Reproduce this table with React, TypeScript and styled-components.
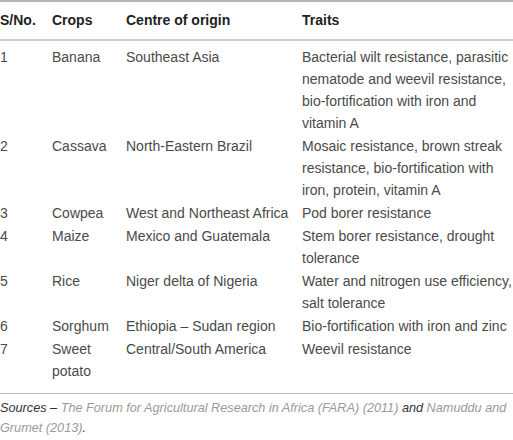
import React from "react";
import styled, { createGlobalStyle } from "styled-components";

const GlobalStyle = createGlobalStyle`
  html, body {
    margin: 0;
    padding: 0;
    background: #ffffff;
  }
  body {
    font-family: "Liberation Sans", Arial, sans-serif;
  }
`;

const Wrapper = styled.div`
  width: 513px;
  color: #444;
`;

const Table = styled.table`
  width: 100%;
  border-collapse: collapse;
  border-top: 2px solid #b4b4b4;
  border-bottom: 1px solid #bdbdbd;
  font-size: 14px;
  line-height: 22px;
`;

const HeadCell = styled.th<{ $w?: number }>`
  text-align: left;
  font-weight: 700;
  color: #222;
  padding: 7px 0 8px;
  border-bottom: 2px solid #cfcfcf;
  vertical-align: top;
  width: ${(p) => (p.$w ? `${p.$w}px` : "auto")};
`;

const Cell = styled.td<{ $first?: boolean; $last?: boolean }>`
  vertical-align: top;
  padding: ${(p) => (p.$first ? "5px" : "0")} 0 ${(p) => (p.$last ? "11px" : "1px")};
  color: #4a4a4a;
`;

const Footnote = styled.div`
  padding: 4px 0 0;
  font-size: 12.7px;
  line-height: 20px;
  font-style: italic;
  color: #333;
`;

const Ref = styled.span`
  color: #9a9a9a;
`;

type Row = { no: string; crop: string; origin: string; traits: string };

const rows: Row[] = [
  {
    no: "1",
    crop: "Banana",
    origin: "Southeast Asia",
    traits:
      "Bacterial wilt resistance, parasitic nematode and weevil resistance, bio-fortification with iron and vitamin A",
  },
  {
    no: "2",
    crop: "Cassava",
    origin: "North-Eastern Brazil",
    traits:
      "Mosaic resistance, brown streak resistance, bio-fortification with iron, protein, vitamin A",
  },
  { no: "3", crop: "Cowpea", origin: "West and Northeast Africa", traits: "Pod borer resistance" },
  { no: "4", crop: "Maize", origin: "Mexico and Guatemala", traits: "Stem borer resistance, drought tolerance" },
  {
    no: "5",
    crop: "Rice",
    origin: "Niger delta of Nigeria",
    traits: "Water and nitrogen use efficiency, salt tolerance",
  },
  { no: "6", crop: "Sorghum", origin: "Ethiopia \u2013 Sudan region", traits: "Bio-fortification with iron and zinc" },
  { no: "7", crop: "Sweet potato", origin: "Central/South America", traits: "Weevil resistance" },
];

export default function App() {
  return (
    <Wrapper>
      <GlobalStyle />
      <Table>
        <thead>
          <tr>
            <HeadCell $w={52}>S/No.</HeadCell>
            <HeadCell $w={74}>Crops</HeadCell>
            <HeadCell $w={176}>Centre of origin</HeadCell>
            <HeadCell>Traits</HeadCell>
          </tr>
        </thead>
        <tbody>
          {rows.map((r, i) => {
            const first = i === 0;
            const last = i === rows.length - 1;
            return (
              <tr key={r.no}>
                <Cell $first={first} $last={last}>{r.no}</Cell>
                <Cell $first={first} $last={last}>{r.crop}</Cell>
                <Cell $first={first} $last={last}>{r.origin}</Cell>
                <Cell $first={first} $last={last}>{r.traits}</Cell>
              </tr>
            );
          })}
        </tbody>
      </Table>
      <Footnote>
        <span>Sources – </span>
        <Ref>The Forum for Agricultural Research in Africa (FARA) (2011)</Ref>
        <span> and </span>
        <Ref>Namuddu and</Ref> <Ref>Grumet (2013)</Ref>
        <span>.</span>
      </Footnote>
    </Wrapper>
  );
}
